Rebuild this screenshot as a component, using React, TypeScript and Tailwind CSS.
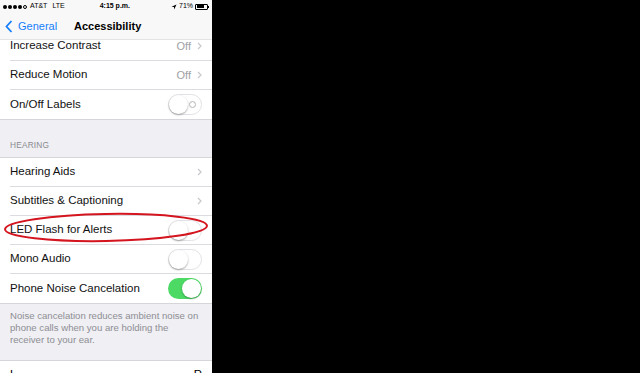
import React from 'react';

const font = { fontFamily: '"Liberation Sans", Arial, sans-serif' };

function Chevron() {
  return (
    <svg width="5" height="8" viewBox="0 0 5 8" className="ml-[6px]">
      <path d="M1 1l3 3-3 3" fill="none" stroke="#c7c7cc" strokeWidth="1.2" />
    </svg>
  );
}

function Toggle({ on = false, label = false }: { on?: boolean; label?: boolean }) {
  if (on) {
    return (
      <div className="relative w-[34px] h-[21px] rounded-full bg-[#4cd964]">
        <div className="absolute right-[1px] top-[1px] w-[19px] h-[19px] rounded-full bg-white shadow-[0_1px_2px_rgba(0,0,0,0.3)]" />
      </div>
    );
  }
  return (
    <div className="relative w-[34px] h-[21px] rounded-full border border-[#e2e2e6] bg-white">
      <div className="absolute left-0 top-0 w-[19px] h-[19px] rounded-full bg-white shadow-[0_1px_2px_rgba(0,0,0,0.35)]" />
      {label && (
        <div className="absolute right-[5px] top-[6px] w-[7px] h-[7px] rounded-full border border-[#b5b5b5]" />
      )}
    </div>
  );
}

function Row({ title, right, last = false }: { title: string; right?: React.ReactNode; last?: boolean }) {
  return (
    <div className="bg-white pl-[10px]">
      <div className={`h-[29px] flex items-center pr-[10px] ${last ? '' : 'border-b border-[#dcdce0]'}`}>
        <span className="text-[11.5px] text-[#111] flex-1">{title}</span>
        {right}
      </div>
    </div>
  );
}

function Off() {
  return (
    <div className="flex items-center">
      <span className="text-[11px] text-[#a0a0a5]">Off</span>
      <Chevron />
    </div>
  );
}

export default function App() {
  return (
    <div className="flex w-[640px] h-[373px] bg-black" style={font}>
      <div className="relative w-[212px] h-[373px] overflow-hidden bg-[#efeff4]">
        <div className="pt-[32px]">
          <div className="border-b border-[#d5d5da]">
            <Row title="Increase Contrast" right={<Off />} />
            <Row title="Reduce Motion" right={<Off />} />
            <Row title="On/Off Labels" right={<Toggle label />} last />
          </div>

          <div className="h-[37px] flex items-end px-[10px] pb-[6px]">
            <span className="text-[8.3px] text-[#8a8a8f] tracking-[0.2px]">HEARING</span>
          </div>

          <div className="border-y border-[#d5d5da]">
            <Row title="Hearing Aids" right={<Chevron />} />
            <Row title="Subtitles & Captioning" right={<Chevron />} />
            <Row title="LED Flash for Alerts" right={<Toggle />} />
            <Row title="Mono Audio" right={<Toggle />} />
            <Row title="Phone Noise Cancelation" right={<Toggle on />} last />
          </div>

          <div className="h-[56px] pl-[10px] pr-[12px] pt-[6px] text-[9.6px] leading-[12px] text-[#8e8e93]">
            Noise cancelation reduces ambient noise on phone calls when you are holding the receiver to your ear.
          </div>

          <div className="bg-white border-t border-[#d5d5da] h-[29px] flex items-center justify-between px-[10px]">
            <span className="text-[11.5px] text-black">L</span>
            <span className="text-[11.5px] text-black">R</span>
          </div>
        </div>

        {/* status + navigation bar */}
        <div className="absolute top-0 left-0 right-0 h-[40px] bg-[#f8f8f8]/95 border-b border-[#e4e4e4]">
          <div className="h-[13px] flex items-center px-[3px] text-[7px] text-black">
            <div className="flex items-center gap-[1px]">
              {[0, 1, 2, 3].map((i) => (
                <div key={i} className="w-[4px] h-[4px] rounded-full bg-black" />
              ))}
              <div className="w-[4px] h-[4px] rounded-full border-[0.5px] border-black" />
            </div>
            <span className="ml-[3px]">AT&amp;T</span>
            <span className="ml-[5px]">LTE</span>
            <span className="flex-1 text-center font-bold pr-[6px]">4:15 p.m.</span>
            <svg width="6" height="6" viewBox="0 0 6 6" className="mr-[2px]">
              <path d="M5.5 0.5L0.5 2.8 3 3 3.2 5.5z" fill="#000" />
            </svg>
            <span>71%</span>
            <div className="ml-[2px] flex items-center">
              <div className="w-[13px] h-[6px] border border-black rounded-[1px] p-[0.5px]">
                <div className="w-[70%] h-full bg-black" />
              </div>
              <div className="w-[1px] h-[2px] bg-black" />
            </div>
          </div>
          <div className="relative h-[27px] flex items-center px-[5px]">
            <svg width="8" height="13" viewBox="0 0 8 13">
              <path d="M6.5 1L1.5 6.5 6.5 12" fill="none" stroke="#157efb" strokeWidth="1.8" />
            </svg>
            <span className="ml-[5px] text-[11px] text-[#157efb]">General</span>
            <span className="absolute left-[74px] text-[11px] font-bold text-black">Accessibility</span>
          </div>
        </div>

        {/* red annotation ellipse */}
        <svg className="absolute left-0 top-[210px]" width="212" height="36" viewBox="0 0 212 36">
          <ellipse cx="106" cy="17.5" rx="101" ry="13.5" fill="none" stroke="#d4141e" strokeWidth="2" transform="rotate(-1 106 17.5)" />
        </svg>
      </div>
      <div className="flex-1 bg-black" />
    </div>
  );
}
